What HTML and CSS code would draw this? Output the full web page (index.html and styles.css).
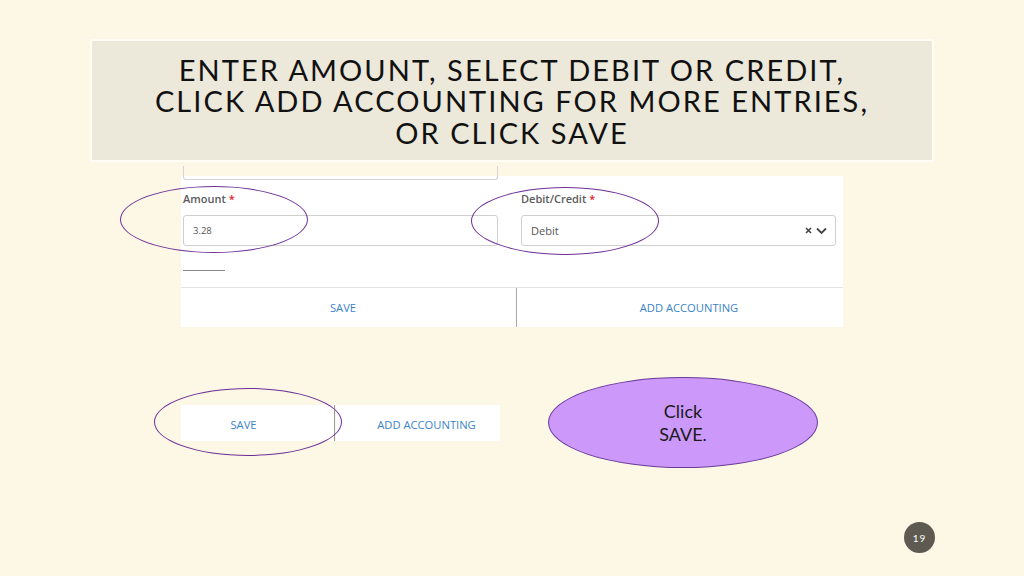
FILE: index.html
```html
<!DOCTYPE html>
<html>
<head>
<meta charset="utf-8">
<link rel="stylesheet" href="styles.css">
</head>
<body>
<div class="slide">
  <div class="title">
    <div>ENTER AMOUNT, SELECT DEBIT OR CREDIT,</div>
    <div>CLICK ADD ACCOUNTING FOR MORE ENTRIES,</div>
    <div>OR CLICK SAVE</div>
  </div>

  <div class="shot1">
    <div class="shot1-top"><div class="prev-input"></div></div>
    <div class="panel">
      <div class="fields">
        <div class="field">
          <div class="label">Amount <span class="req">*</span></div>
          <div class="input">3.28</div>
        </div>
        <div class="field">
          <div class="label">Debit/Credit <span class="req">*</span></div>
          <div class="input select">
            <span class="sel-val">Debit</span>
            <span class="sel-icons">
              <svg width="7" height="7" viewBox="0 0 7 7"><path d="M1 1L6 6M6 1L1 6" stroke="#444" stroke-width="1.6"/></svg>
              <svg width="11" height="8" viewBox="0 0 11 8"><path d="M1 1.5L5.5 6L10 1.5" fill="none" stroke="#444" stroke-width="1.8"/></svg>
            </span>
          </div>
        </div>
      </div>
      <div class="rule"></div>
      <div class="buttons">
        <div class="btn btn-left">SAVE</div>
        <div class="btn btn-right">ADD ACCOUNTING</div>
      </div>
    </div>
  </div>

  <div class="row2">
    <div class="shot2">
      <div class="btn2 btn2-left">SAVE</div>
      <div class="btn2 btn2-right">ADD ACCOUNTING</div>
    </div>
    <div class="callout">Click<br>SAVE.</div>
  </div>

  <span class="ring ring1"></span>
  <span class="ring ring2"></span>
  <span class="ring ring3"></span>

  <div class="pagenum">19</div>
</div>
</body>
</html>
```

FILE: styles.css
```css
html, body {
  margin: 0;
  padding: 0;
}
body {
  background: #fdf7e5;
}
.slide {
  position: relative;
  width: 1024px;
  height: 576px;
  overflow: hidden;
  background: #fdf7e5;
}
.title {
  box-sizing: border-box;
  margin: 39px 0 0 90px;
  width: 844px;
  height: 123px;
  border: 2px solid #fffdf6;
  background: #ece8da;
  display: flex;
  flex-direction: column;
  align-items: center;
  justify-content: center;
  font-family: Lato, "Open Sans", sans-serif;
  font-size: 29px;
  line-height: 31.5px;
  letter-spacing: 2.05px;
  color: #111;
  padding-top: 1px;
}
.shot1 {
  margin-left: 181px;
  width: 662px;
}
.shot1-top {
  height: 14px;
}
.panel {
  background: #fff;
  font-family: "Open Sans", sans-serif;
}
.prev-input {
  margin-left: 2px;
  width: 315px;
  height: 14px;
  box-sizing: border-box;
  border: 1px solid #d4d4d4;
  border-top: none;
  border-radius: 0 0 3px 3px;
  margin-bottom: -14px;
  position: relative;
  top: 4px;
}
.fields {
  display: grid;
  grid-template-columns: 315px 315px;
  column-gap: 23px;
  padding: 15px 0 0 2px;
}
.label {
  font-size: 11px;
  line-height: 16px;
  font-weight: 600;
  color: #5b5b5b;
  margin-bottom: 8px;
}
.req {
  color: #e0242c;
}
.input {
  box-sizing: border-box;
  height: 31px;
  border: 1px solid #cfcfcf;
  border-radius: 3px;
  font-size: 9.5px;
  color: #555;
  padding: 0 9px;
  display: flex;
  align-items: center;
}
.select {
  font-size: 11px;
  justify-content: space-between;
  padding-right: 8px;
}
.sel-icons {
  display: flex;
  align-items: center;
  gap: 4px;
}
.rule {
  margin: 24px 0 0 2px;
  width: 42px;
  height: 1px;
  background: #888;
}
.buttons {
  margin-top: 16px;
  display: flex;
  height: 39px;
  border-top: 1px solid #e3e3e3;
}
.btn {
  flex: 1;
  display: flex;
  align-items: center;
  justify-content: center;
  font-size: 11.2px;
  color: #3a84c8;
}
.btn-left {
  flex: 0 0 336px;
  box-sizing: border-box;
  padding-right: 11px;
  border-right: 1px solid #a8a8a8;
}
.btn-right {
  padding-left: 18px;
}
.row2 {
  margin-top: 50px;
  display: flex;
  align-items: center;
}
.shot2 {
  margin-left: 181px;
  width: 319px;
  height: 36px;
  display: flex;
  font-family: "Open Sans", sans-serif;
}
.btn2 {
  flex: 1;
  background: #fff;
  display: flex;
  align-items: center;
  justify-content: center;
  font-size: 11.2px;
  color: #3a84c8;
  padding-top: 4px;
}
.btn2-left {
  flex: 0 0 154px;
  box-sizing: border-box;
  padding-right: 28px;
  border-right: 1px solid #9c9c9c;
  margin-right: 1px;
}
.btn2-right {
  padding-left: 17px;
}
.callout {
  box-sizing: border-box;
  margin-left: 48px;
  width: 270px;
  height: 91px;
  border-radius: 50%;
  border: 1.3px solid #6a3a9a;
  background: #cc99fb;
  display: flex;
  align-items: center;
  justify-content: center;
  text-align: center;
  font-family: Lato, "Open Sans", sans-serif;
  font-size: 18px;
  line-height: 23px;
  color: #1a1a1a;
  padding-top: 1px;
}
.ring {
  position: absolute;
  box-sizing: border-box;
  border: 1.3px solid #6e2f99;
  border-radius: 50%;
}
.ring1 {
  left: 120px;
  top: 186px;
  width: 188px;
  height: 67px;
}
.ring2 {
  left: 471px;
  top: 187px;
  width: 188px;
  height: 68px;
}
.ring3 {
  left: 154px;
  top: 388px;
  width: 188px;
  height: 68px;
}
.pagenum {
  position: absolute;
  left: 904px;
  top: 522px;
  width: 31px;
  height: 31px;
  border-radius: 50%;
  background: #5e5a52;
  color: #fff;
  font-family: Lato, sans-serif;
  font-size: 10px;
  letter-spacing: 1px;
  display: flex;
  align-items: center;
  justify-content: center;
}
```
